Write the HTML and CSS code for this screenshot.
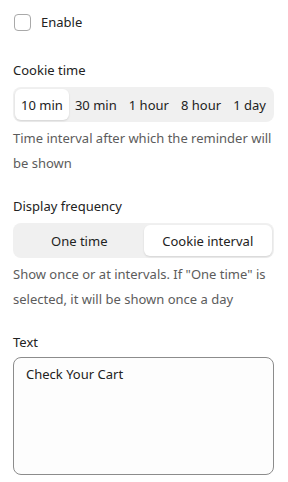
FILE: index.html
```html
<!DOCTYPE html>
<html lang="en">
<head>
    <meta charset="UTF-8">
    <meta name="viewport" content="width=device-width, initial-scale=1.0">
    <title>Reminder settings</title>
    <link rel="stylesheet" href="styles.css">
</head>
<body>
    <div class="settings">
        <label class="check-row">
            <span class="checkbox"></span>
            <span class="check-label">Enable</span>
        </label>

        <div class="field">
            <div class="field-label">Cookie time</div>
            <div class="segmented">
                <div class="segment active">10 min</div>
                <div class="segment">30 min</div>
                <div class="segment">1 hour</div>
                <div class="segment">8 hour</div>
                <div class="segment">1 day</div>
            </div>
            <div class="hint">Time interval after which the reminder will be shown</div>
        </div>

        <div class="field">
            <div class="field-label">Display frequency</div>
            <div class="segmented equal">
                <div class="segment">One time</div>
                <div class="segment active">Cookie interval</div>
            </div>
            <div class="hint">Show once or at intervals. If "One time" is selected, it will be shown once a day</div>
        </div>

        <div class="field text-field">
            <div class="field-label">Text</div>
            <div class="textarea">Check Your Cart</div>
        </div>
    </div>
</body>
</html>
```

FILE: styles.css
```css
body {
    margin: 0;
    background-color: #fff;
    font-family: "Noto Sans", "Open Sans", sans-serif;
    font-size: 13px;
    color: #222;
}

.settings {
    padding: 13px 14px 0 13px;
}

.check-row {
    display: flex;
    align-items: center;
    gap: 10px;
    height: 18px;
    padding-left: 1px;
}

.checkbox {
    width: 15px;
    height: 15px;
    border: 1px solid #a9a9a9;
    border-radius: 4px;
    background-color: #fff;
}

.check-label {
    color: #222;
}

.field {
    margin-top: 29px;
}

.field + .field {
    margin-top: 20px;
}

.field-label {
    line-height: 20px;
    margin-bottom: 7px;
}

.text-field .field-label {
    margin-bottom: 5px;
}

.segmented {
    display: flex;
    background-color: #f0f0f0;
    border-radius: 8px;
    padding: 2px;
    height: 31px;
}

.segment {
    flex: auto;
    display: flex;
    align-items: center;
    justify-content: center;
    padding: 0 5px;
    border-radius: 6px;
    color: #222;
    white-space: nowrap;
}

.segmented.equal .segment {
    flex: 1;
}

.segment.active {
    background-color: #fff;
    box-shadow: 0 1px 2px rgba(0, 0, 0, 0.12);
}

.hint {
    margin-top: 4px;
    line-height: 25px;
    color: #5c5c5c;
}

.textarea {
    height: 104px;
    border: 1px solid #8c8c8c;
    border-radius: 8px;
    background-color: #fdfdfd;
    padding: 6px 12px;
    line-height: 20px;
}
```
